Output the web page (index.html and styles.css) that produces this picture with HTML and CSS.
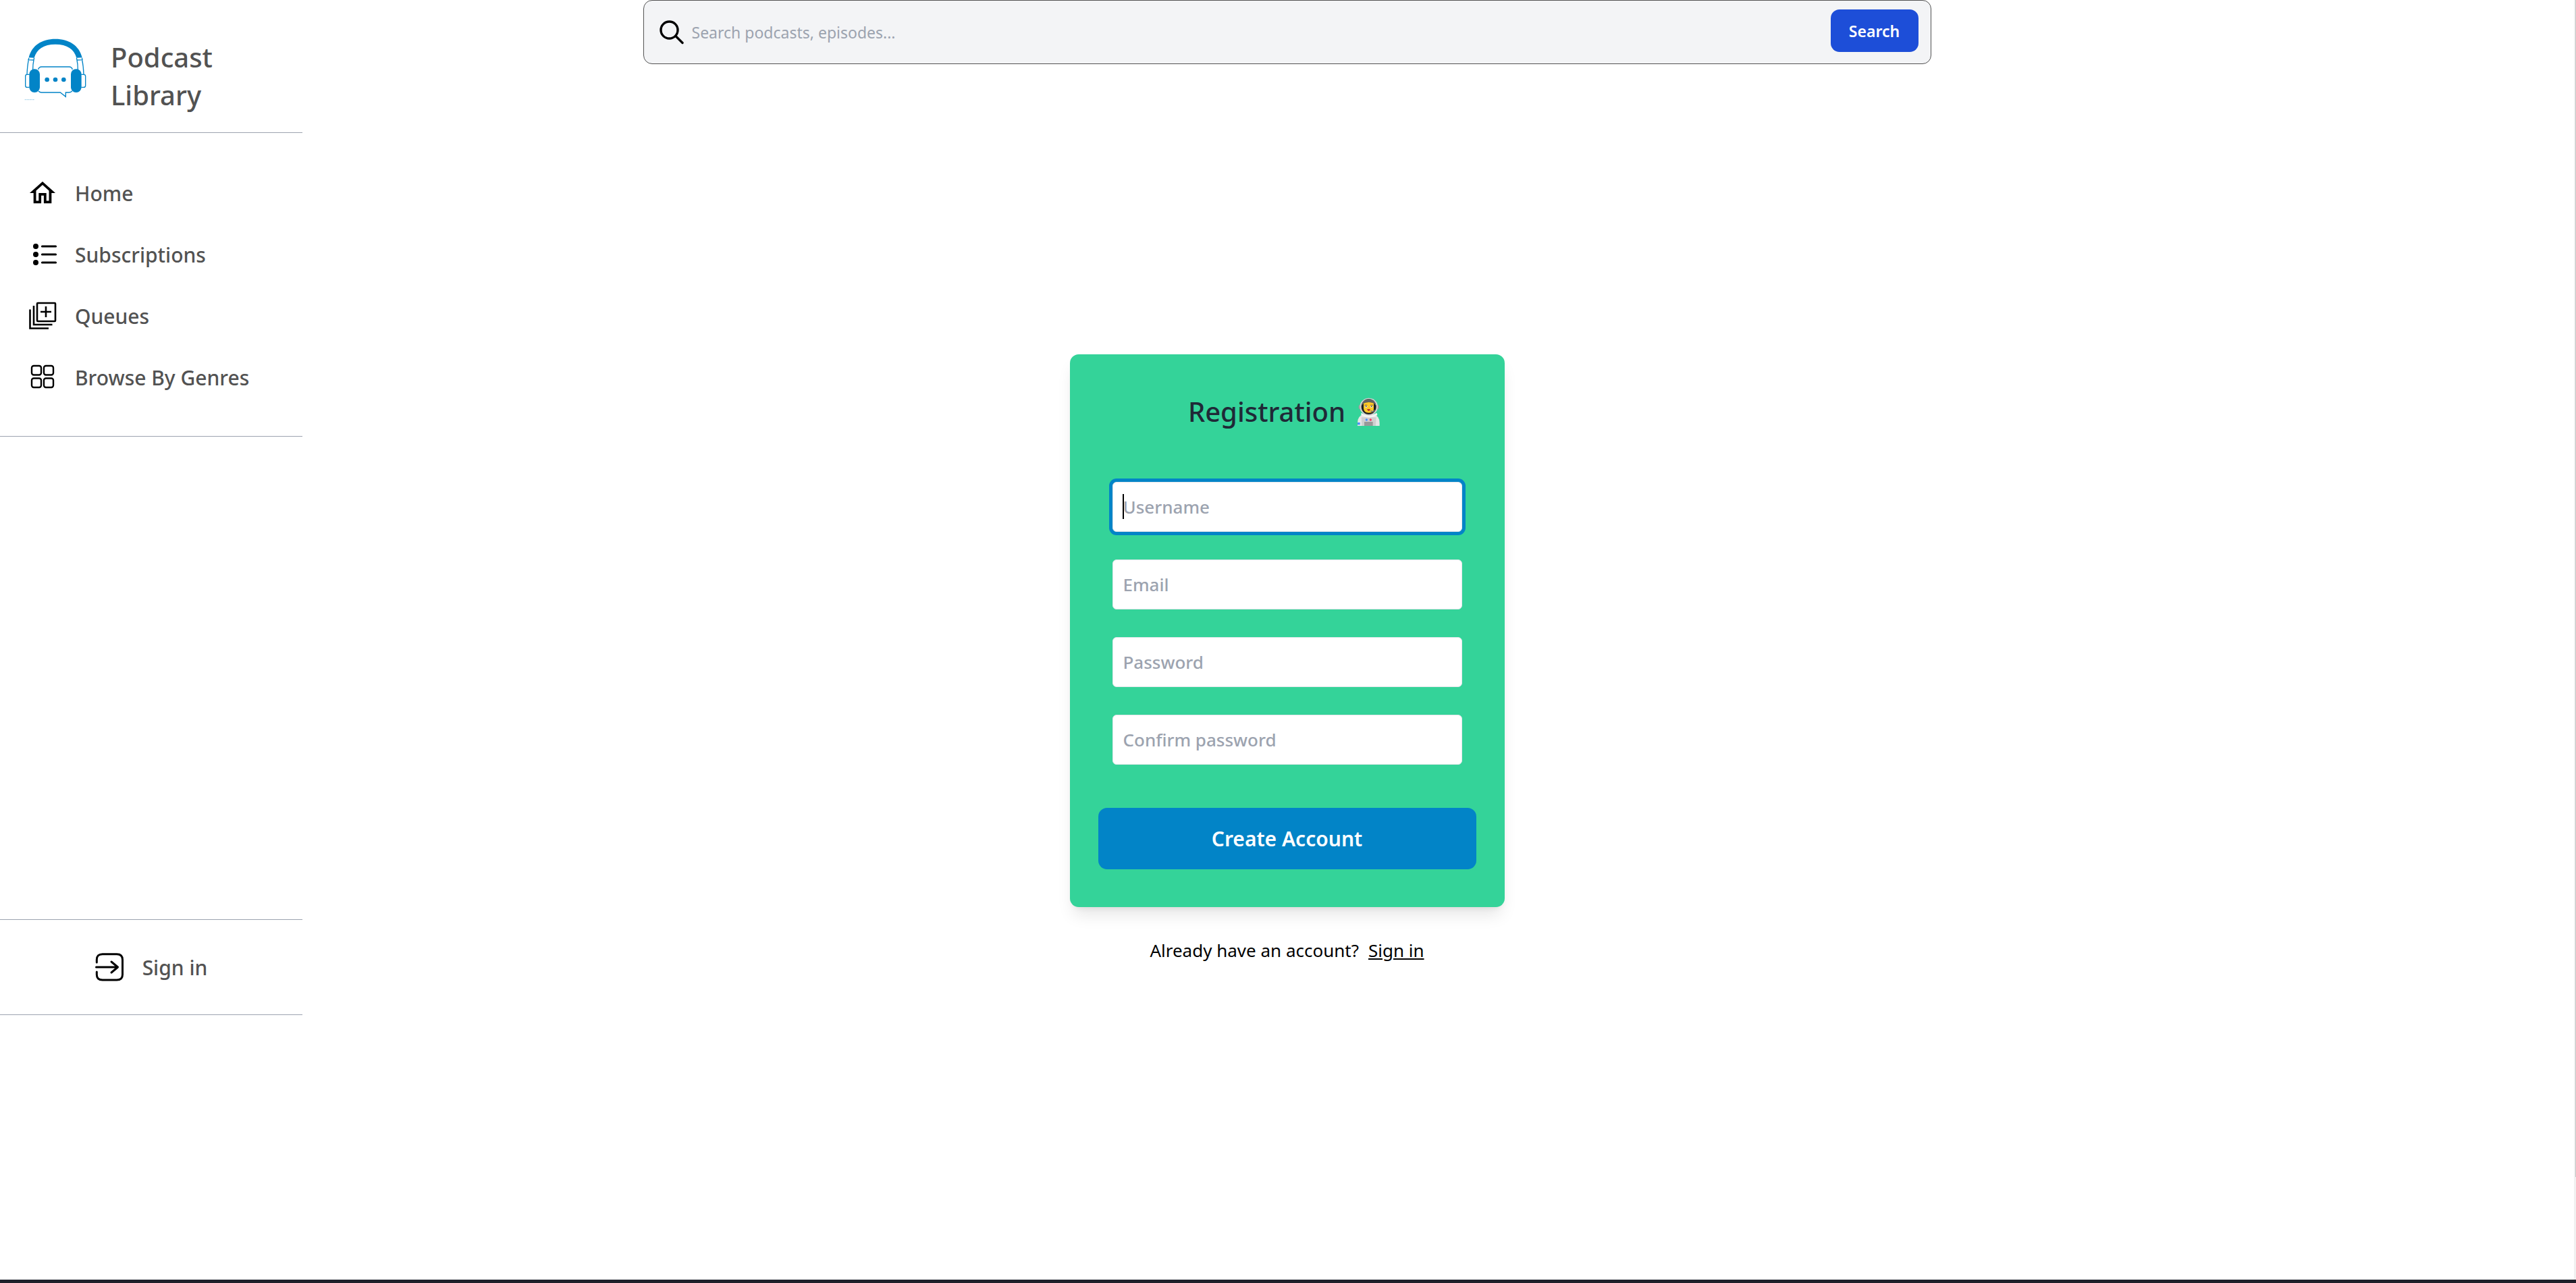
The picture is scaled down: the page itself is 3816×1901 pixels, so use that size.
FILE: index.html
```html
<!DOCTYPE html>
<html lang="en">
<head>
<meta charset="utf-8">
<title>Podcast Library</title>
<link rel="stylesheet" href="styles.css">
</head>
<body>
<div class="page">
  <aside class="sidebar">
    <a class="brand" href="#">
      <svg class="brand-logo" viewBox="33 36 276 276" fill="none" stroke="#0284c7" stroke-width="4" aria-hidden="true">
        <path fill="#0284c7" stroke="none" d="M53 121C66 66 112 38 171 38s106 28 119 83l-25 1C255 84 223 62 171 62S88 84 77 122z"/>
        <path d="M54 122l-3 9 24 1 2-10M289 122l2 9-24 1-2-10M52 131c-4 20-6 40-7 64M75 132c-3 14-4 28-4 42M290 131c4 20 6 40 7 64M267 132c3 14 4 28 4 42"/>
        <path d="M56 196H45q-7 0-7 8v41q0 8 7 8h11M286 196h11q8 0 8 8v41q0 8-8 8h-11"/>
        <path d="M95 174q3-12 15-12h122q12 0 15 12M96 270q6 6 14 6h83l24 19v-19h14q10 0 15-7"/>
        <g fill="#0284c7" stroke="none">
          <rect x="55" y="172" width="47" height="104" rx="23"/>
          <rect x="240" y="172" width="47" height="104" rx="23"/>
          <circle cx="134" cy="219" r="10"/><circle cx="171" cy="219" r="10"/><circle cx="208" cy="219" r="10"/>
        </g>
        <path stroke-width="3" opacity=".4" stroke-dasharray="6 2 3 1" d="M35 308h42"/>
      </svg>
      <span class="brand-name"><span>Podcast</span><span>Library</span></span>
    </a>
    <nav class="nav">
      <a class="nav-item" href="#">
        <svg class="icon" viewBox="1.5 2 21 21" aria-hidden="true"><path d="M12 5.69l5 4.5V18h-2v-6H9v6H7v-7.81l5-4.5M12 3L2 12h3v8h6v-6h2v6h6v-8h3z"/></svg>
        Home
      </a>
      <a class="nav-item" href="#">
        <svg class="icon" viewBox="0 0 40 40" aria-hidden="true"><circle cx="10" cy="7" r="4"/><circle cx="10" cy="19" r="4"/><circle cx="10" cy="31" r="4"/><path stroke="#000" stroke-width="3.2" stroke-linecap="round" d="M19.500 7H39.500M19.500 19H39.500M19.500 31H39.500"/></svg>
        Subscriptions
      </a>
      <a class="nav-item" href="#">
        <svg class="icon line" viewBox="0 0 40 40" stroke-width="2.600" aria-hidden="true"><rect x="12" y="0" width="27" height="27" rx="1"/><path d="M25 5v16M17 13h16M7 4v28h27.500M1.500 9.500V37.500H29"/></svg>
        Queues
      </a>
      <a class="nav-item" href="#">
        <svg class="icon line" viewBox="0 0 40 40" stroke-width="2.400" aria-hidden="true"><rect x="4" y="2" width="14" height="13.500" rx="3"/><rect x="22" y="2" width="14" height="13.500" rx="3"/><rect x="4" y="20.500" width="14" height="13.500" rx="3"/><rect x="22" y="20.500" width="14" height="13.500" rx="3"/></svg>
        Browse By Genres
      </a>
    </nav>
    <div class="account">
      <a class="account-link" href="#">
        <svg class="icon-account line" viewBox="0 0 42 42" stroke-width="3" stroke-linecap="round" stroke-linejoin="round" aria-hidden="true"><path d="M2.300 14V10q0-8.300 8.500-8.300H32q8.500 0 8.500 8.300V32q0 8-8.500 8H10.800q-8.500 0-8.500-8V28M1.500 21H33M24 13l9.500 8L24 29"/></svg>
        Sign in
      </a>
    </div>
  </aside>

  <main class="content">
    <form class="search" role="search">
      <svg class="icon-search line" viewBox="0 0 36 36" stroke-width="3.400" stroke-linecap="round" aria-hidden="true"><circle cx="14.500" cy="14.500" r="12.500"/><path d="M24 23.500l10 10"/></svg>
      <input class="search-input" type="search" placeholder="Search podcasts, episodes..." aria-label="Search podcasts, episodes">
      <button class="search-button" type="submit">Search</button>
    </form>

    <form class="card">
      <h1 class="card-title">
        Registration
        <svg class="astronaut" viewBox="33 30 156 126" aria-hidden="true">
          <path fill="#e6e6e6" d="M63 156v-13q0-32 27-38h44q27 6 27 38v13z"/>
          <path fill="#cfcfcf" d="M80 118h66l-2 38H82z"/>
          <path fill="#f2f2f2" d="M79 98q34 20 70 0l2 10q-36 22-72 0z"/>
          <rect x="68" y="62" width="90" height="21" rx="8" fill="#9a9a9a"/>
          <ellipse cx="113" cy="71" rx="40" ry="39" fill="#cfcfcf"/>
          <ellipse cx="113" cy="71" rx="33" ry="34" fill="#1f1f1f"/>
          <path fill="#636363" d="M81 66q4-29 32-29t32 29q-10-14-32-14T81 66z"/>
          <path fill="#ffc928" d="M90 56q22-10 45 0v22q0 20-22 20T90 78z"/>
          <path fill="#8d6420" d="M94 62h12v3H94zM120 62h12v3h-12z"/>
          <circle cx="101" cy="70" r="5" fill="#fff"/><circle cx="125" cy="70" r="5" fill="#fff"/>
          <circle cx="101" cy="70" r="3" fill="#444"/><circle cx="125" cy="70" r="3" fill="#444"/>
          <path fill="#b3202c" d="M105 82h15q-2 8-7 8t-8-8z"/>
          <path fill="none" stroke="#777" stroke-width="5" d="M121 89l10 4 8-7"/>
          <circle cx="103" cy="129" r="5" fill="#4d8dff"/><circle cx="121" cy="129" r="5" fill="#f8375f"/>
          <path fill="#999" d="M93 138h38v18H93z"/>
          <path fill="#4d8dff" d="M63 141h11v10H63z"/>
        </svg>
      </h1>
      <div class="fields">
        <input class="field field-active" type="text" placeholder="Username" aria-label="Username">
        <input class="field" type="email" placeholder="Email" aria-label="Email">
        <input class="field" type="password" placeholder="Password" aria-label="Password">
        <input class="field" type="password" placeholder="Confirm password" aria-label="Confirm password">
      </div>
      <button class="submit" type="submit">Create Account</button>
    </form>
    <p class="login-hint">Already have an account? <a class="login-link" href="#">Sign in</a></p>
  </main>
</div>
<footer class="bottom-bar"></footer>
<div class="scroll-track"><div class="scroll-thumb"></div></div>
</body>
</html>
```
FILE: styles.css
```css
* {
  box-sizing: border-box;
}

body {
  margin: 0;
  min-height: 100vh;
  display: flex;
  flex-direction: column;
  background: #fff;
  color: #000;
  font-family: "Noto Sans", "Open Sans", sans-serif;
}

a {
  color: inherit;
  text-decoration: none;
}

input,
button {
  font-family: inherit;
}

.page {
  flex: 1;
  display: grid;
  grid-template-columns: 448px 1fr 448px;
  padding-right: 3px;
}

/* Sidebar */
.sidebar {
  color: #525252;
  font-weight: 500;
}

.brand {
  display: flex;
  gap: 36px;
  padding: 57px 36px 27px;
  border-bottom: 1px solid #9ca3af;
}

.brand-logo {
  width: 92px;
  height: 92px;
}

.brand-name {
  display: flex;
  flex-direction: column;
  font-size: 40px;
  line-height: 56px;
}

.nav {
  padding: 44px 43px 41px;
  border-bottom: 1px solid #9ca3af;
}

.nav-item {
  display: flex;
  align-items: center;
  gap: 28px;
  height: 91px;
  font-size: 30px;
  white-space: nowrap;
}

.icon {
  width: 40px;
  height: 40px;
  overflow: visible;
  fill: #000;
}

.line {
  fill: none;
  stroke: #000;
}

.account {
  margin-top: 715px;
  border: solid #9ca3af;
  border-width: 1px 0;
}

.account-link {
  display: flex;
  align-items: center;
  justify-content: center;
  gap: 28px;
  height: 140px;
  font-size: 30px;
}

.icon-account {
  width: 42px;
  height: 42px;
  overflow: visible;
}

/* Main column */
.content {
  display: flex;
  flex-direction: column;
  align-items: center;
}

.search {
  display: flex;
  align-items: center;
  width: 50vw;
  max-width: 100%;
  height: 95px;
  padding: 0 18px 0 23px;
  border: 1px solid #525252;
  border-radius: 13px;
  background: #f3f4f6;
}

.icon-search {
  flex: none;
  width: 36px;
  height: 36px;
}

.search-input {
  flex: 1;
  min-width: 0;
  height: 64px;
  padding: 0 12px;
  border: 0;
  outline: 0;
  background: none;
  font-size: 23px;
}

input::placeholder {
  color: #9ca3af;
  opacity: 1;
}

.search-button {
  width: 130px;
  height: 63px;
  margin-bottom: 4px;
  padding: 0;
  border: 0;
  border-radius: 13px;
  background: #1d4ed8;
  color: #fff;
  font-size: 23px;
  font-weight: 600;
}

/* Registration card */
.card {
  width: 644px;
  max-width: 100%;
  margin-top: 430px;
  padding: 57px 42px 56px;
  border-radius: 13px;
  background: #34d399;
  box-shadow: 0 16px 24px -5px rgba(0, 0, 0, 0.1), 0 6px 10px -6px rgba(0, 0, 0, 0.1);
}

.card-title {
  display: flex;
  align-items: center;
  justify-content: center;
  gap: 8px;
  margin: 0;
  color: #1f2937;
  font-size: 40px;
  font-weight: 500;
  line-height: 56px;
}

.astronaut {
  width: 52px;
  height: 42px;
}

.fields {
  display: flex;
  flex-direction: column;
  gap: 41px;
  padding: 76px 21px 64px;
}

.field {
  width: 100%;
  height: 74px;
  padding: 0 15px;
  border: 1px solid #e5e7eb;
  border-radius: 6px;
  background: #fff;
  font-size: 26px;
  font-weight: 500;
}

/* The focused field shows its ring and text cursor */
.field-active {
  outline: 0;
  box-shadow: 0 0 0 5px #0284c7;
  background: linear-gradient(#000, #000) 14px 17px / 2px 37px no-repeat #fff;
}

.submit {
  display: block;
  width: 100%;
  height: 91px;
  padding: 0;
  border: 0;
  border-radius: 13px;
  background: #0284c7;
  color: #fff;
  font-size: 30px;
  font-weight: 600;
}

.login-hint {
  display: flex;
  gap: 14px;
  margin: 44px 0 0;
  font-size: 26px;
  line-height: 40px;
}

.login-link {
  text-decoration: underline;
}

/* Window edges */
.bottom-bar {
  height: 5px;
  background: #1e202a;
}

.scroll-track {
  position: fixed;
  top: 0;
  right: 0;
  bottom: 5px;
  width: 3px;
  padding-left: 2px;
  background: #f1f1f1;
}

.scroll-thumb {
  height: 92%;
  background: #c1c1c1;
}
```
